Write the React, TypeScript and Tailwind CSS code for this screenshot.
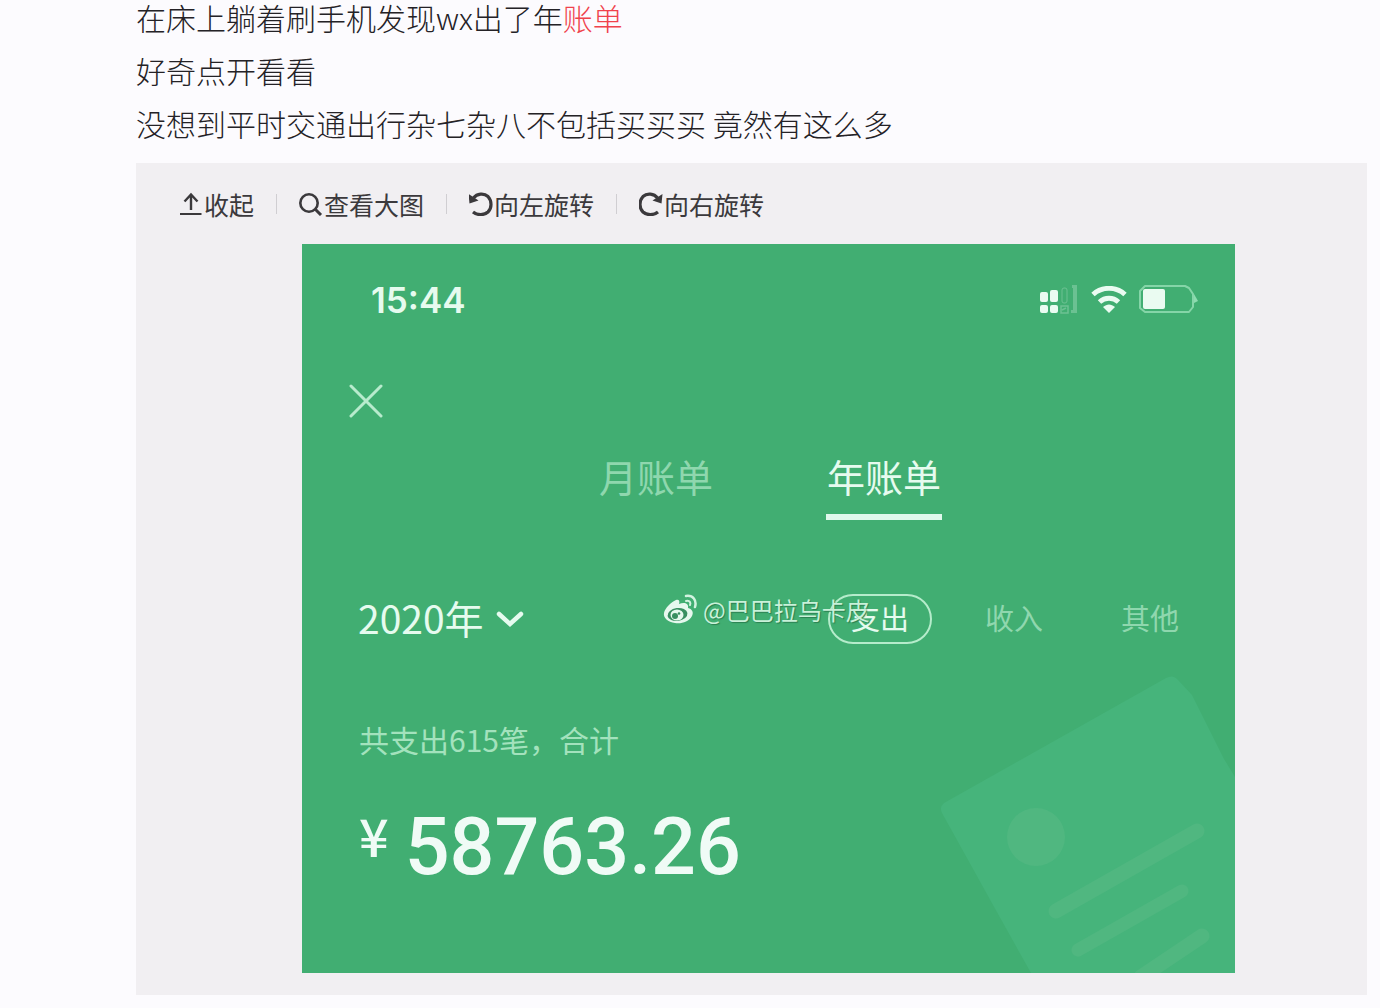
import React, { useState } from "react";

function CollapseIcon() {
  return (
    <svg className="h-6 w-6" viewBox="0 0 24 24" fill="none" stroke="currentColor" strokeWidth="2" aria-hidden="true">
      <path d="M12 18V3M5.500 9.500L12 2.500L18.500 9.500" strokeWidth="2.400" />
      <path d="M1 22H22.500" />
    </svg>
  );
}

function SearchIcon() {
  return (
    <svg className="h-6 w-6" viewBox="0 0 24 24" fill="none" stroke="currentColor" strokeWidth="2.600" aria-hidden="true">
      <circle cx="10" cy="11" r="8.700" />
      <path d="M16 17L22 23" strokeWidth="3" />
    </svg>
  );
}

function RotateIcon({ flip = false }: { flip?: boolean }) {
  return (
    <svg className="h-6 w-6" viewBox="0 0 24 24" fill="none" stroke="currentColor" strokeWidth="3.200" aria-hidden="true">
      <g transform={flip ? "matrix(-1 0 0 1 23 0)" : undefined}>
        <path d="M4.500 6C8 1.500 15 0.800 19 4.500C23 9 23 16 19 20C15.500 23.300 8.500 23.700 4 20" />
        <path d="M-0.500 2L0.500 11.500L9.500 8.500Z" fill="currentColor" stroke="none" />
      </g>
    </svg>
  );
}

function StatusIcons() {
  return (
    <div className="flex items-center gap-3 text-[#eafbf1]">
      <svg className="h-8 w-10" viewBox="0 0 40 32" fill="currentColor" aria-hidden="true">
        <rect x="1" y="8" width="8" height="10" rx="2" />
        <rect x="11" y="6" width="8" height="12" rx="2" />
        <rect x="1" y="21" width="8" height="8" rx="2" />
        <rect x="11" y="21" width="8" height="8" rx="2" />
        <g opacity="0.250">
          <rect x="23" y="4" width="5" height="15" rx="2" fill="none" stroke="currentColor" />
          <path d="M33 1H38V29H32V26H34V4H33Z" />
          <path d="M22 22H29V29H22ZM23 26L27 24" fill="none" stroke="currentColor" strokeWidth="1.500" />
        </g>
      </svg>
      <svg className="h-7 w-9" viewBox="0 0 36 28" fill="none" stroke="currentColor" strokeWidth="5" aria-hidden="true">
        <path d="M2 8.500C11 0.300 25 0.300 34 8.500" />
        <path d="M8.500 16C14 11 22 11 27.500 16" />
        <path d="M12 21C16 17.500 20 17.500 24 21L18 27Z" fill="currentColor" stroke="none" />
      </svg>
      <svg className="h-8 w-15" viewBox="0 0 60 32" fill="none" aria-hidden="true">
        <path d="M6 2H46L50 4L54 10V23L50 28H6L1 24V7Z" stroke="#a3e6bf" strokeWidth="2" strokeLinejoin="round" opacity="0.700" />
        <path d="M55 10L59 17L55 19Z" fill="#8edbb0" />
        <rect x="4" y="5" width="22" height="20" rx="2" fill="currentColor" />
      </svg>
    </div>
  );
}

function WeiboMark() {
  return (
    <svg className="h-8 w-9" viewBox="0 0 36 32" fill="none" aria-hidden="true">
      <path
        d="M13 6C16 5 17 7 16 10C21 8 26 9 25 14C29 15 31 18 29 22C26 28 18 30 12 29C5 28 0 24 1 19C2 14 8 8 13 6Z"
        fill="#e6f8ee"
      />
      <ellipse cx="14.500" cy="20.500" rx="10" ry="6.500" fill="#398f61" transform="rotate(-8 14.500 20.500)" />
      <ellipse cx="14" cy="21" rx="6.500" ry="5.500" fill="#e6f8ee" />
      <circle cx="12" cy="22" r="3" fill="#398f61" />
      <circle cx="16" cy="19.500" r="1.300" fill="#398f61" />
      <path d="M23 2C30 1 34 6 32 13" stroke="#d2f3e0" strokeWidth="2.500" strokeLinecap="round" />
      <path d="M23 7C27 6 28 9 27 11" stroke="#d2f3e0" strokeWidth="2" strokeLinecap="round" />
    </svg>
  );
}

function CardDrawing() {
  return (
    <svg className="pointer-events-none absolute right-0 bottom-0 h-[300px] w-[300px]" viewBox="0 0 300 300" aria-hidden="true">
      <path d="M9 130L231 5Q238 1 243 7L257 22L289 86L300 104V300H96L58 232L7 140Q4 134 9 130Z" fill="#46b47b" />
      <circle cx="101" cy="164" r="29" fill="#50b780" />
      <g stroke="#50b780" strokeWidth="15" strokeLinecap="round">
        <path d="M121 238L262 158" />
        <path d="M143 277L247 218" strokeWidth="13" />
        <path d="M206 304L267 263" />
      </g>
    </svg>
  );
}

const tools = [
  { label: "收起", icon: <CollapseIcon /> },
  { label: "查看大图", icon: <SearchIcon /> },
  { label: "向左旋转", icon: <RotateIcon /> },
  { label: "向右旋转", icon: <RotateIcon flip /> },
];

function Toolbar() {
  return (
    <div className="flex h-[81px] items-center pl-[43px] text-[25px] leading-9 text-[#3b393c]">
      {tools.map((tool, i) => (
        <React.Fragment key={tool.label}>
          {i > 0 && <span className="mx-[22px] h-5 w-px bg-[#d0ced2]" />}
          <button type="button" className="flex items-center gap-px whitespace-nowrap">
            {tool.icon}
            {tool.label}
          </button>
        </React.Fragment>
      ))}
    </div>
  );
}

function BillPanel() {
  const [tab, setTab] = useState("年账单");
  const [kind, setKind] = useState("支出");
  return (
    <section className="relative mr-[132px] ml-[166px] overflow-hidden bg-[#41ae72] pt-8 pb-[86px] text-[#e6fbef]">
      <CardDrawing />
      <div className="relative flex h-12 items-center justify-between pr-9 pl-[69px]">
        <time className="font-['Inter',sans-serif] text-[35px] leading-none font-semibold">15:44</time>
        <StatusIcons />
      </div>
      <button type="button" aria-label="关闭" className="relative mt-[60px] ml-[46px] block">
        <svg className="h-[34px] w-9" viewBox="0 0 36 34" fill="none" stroke="#b8ebcd" strokeWidth="3" strokeLinecap="round" aria-hidden="true">
          <path d="M3 2L33 32M33 2L3 32" />
        </svg>
      </button>
      <div role="tablist" className="relative mt-8 flex gap-[112px] pl-[296px]">
        {["月账单", "年账单"].map((name) => (
          <button
            key={name}
            type="button"
            role="tab"
            aria-selected={tab === name}
            onClick={() => setTab(name)}
            className={
              "border-b-[6px] px-px pb-3 text-[38px] leading-[52px] whitespace-nowrap " +
              (tab === name ? "border-[#e0f8ec]" : "border-transparent text-[#8fd7ae]")
            }
          >
            {name}
          </button>
        ))}
      </div>
      <div className="relative mt-[74px] flex h-[50px] items-center justify-between pr-14 pl-14">
        <label className="relative flex items-center">
          <span className="sr-only">年份</span>
          <select className="h-16 appearance-none bg-transparent pr-10 pb-1 text-[39px] leading-15">
            <option>2020年</option>
          </select>
          <svg className="pointer-events-none absolute right-0 h-5 w-7" viewBox="0 0 28 20" fill="none" stroke="currentColor" strokeWidth="4.500" aria-hidden="true">
            <path d="M3 5L14 15L25 5" strokeLinecap="round" />
          </svg>
        </label>
        <div className="flex items-center text-[29px] leading-[42px]">
          {["支出", "收入", "其他"].map((name) => (
            <button
              key={name}
              type="button"
              aria-pressed={kind === name}
              onClick={() => setKind(name)}
              className={
                kind === name
                  ? "mr-[53px] rounded-full border-2 border-[#b5eccb] px-[21px] pb-1"
                  : "mr-[78px] pb-1 text-[#8fd7ae] last:mr-0"
              }
            >
              {name}
            </button>
          ))}
        </div>
        <div className="absolute top-0 left-[361px] flex items-center gap-1 text-2xl leading-8 whitespace-nowrap text-[#c9f1d9] [text-shadow:1px_1px_1px_#2b7f50]">
          <WeiboMark />
          <span>@巴巴拉乌卡皮</span>
        </div>
      </div>
      <p className="relative mt-[75px] pl-[57px] text-[30px] leading-10 text-[#a3e2bd]">共支出615笔，合计</p>
      <p className="relative mt-12 flex pl-[57px] leading-20 font-medium text-[#f0fbf6]">
        <span className="text-[52px] leading-14">¥</span>
        <span className="ml-4 font-['Roboto',sans-serif] text-[79px]">58763.26</span>
      </p>
    </section>
  );
}

export default function App() {
  return (
    <main className="min-h-screen overflow-x-hidden bg-[#fcfbfe] pr-[13px] pb-[13px] pl-[136px] font-['Noto_Sans_CJK_SC',sans-serif]">
      <article className="flex flex-col gap-[19px] text-[30px] leading-[34px] font-light text-[#242226]">
        <p>
          在床上躺着刷手机发现wx出了年
          <a href="#bill" className="text-[#f0424c]">账单</a>
        </p>
        <p>好奇点开看看</p>
        <p>没想到平时交通出行杂七杂八不包括买买买 竟然有这么多</p>
      </article>
      <div id="bill" className="mt-[23px] bg-[#f1eff2] pb-[22px]">
        <Toolbar />
        <BillPanel />
      </div>
    </main>
  );
}
